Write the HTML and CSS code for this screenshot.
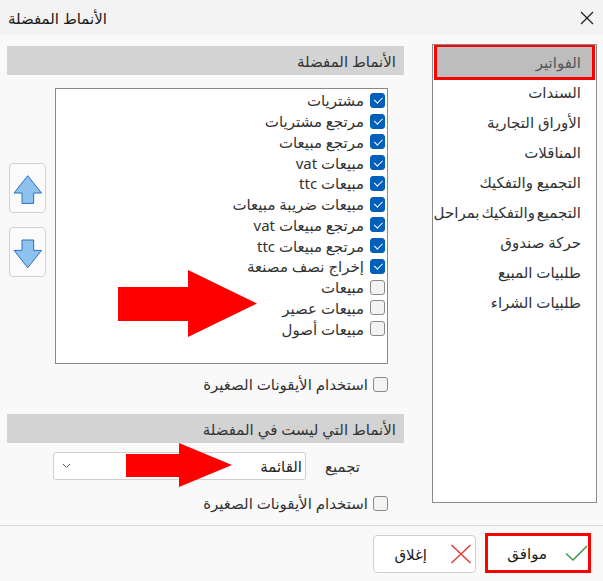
FILE: index.html
```html
<!DOCTYPE html>
<html lang="ar">
<head>
<meta charset="utf-8">
<title>الأنماط المفضلة</title>
<link rel="stylesheet" href="styles.css">
</head>
<body>
<div class="dialog">
  <div class="titlebar">
    <div class="title" dir="rtl">الأنماط المفضلة</div>
    <svg class="close-x" width="14" height="14" viewBox="0 0 14 14"><path d="M1 1 L13 13 M13 1 L1 13" stroke="#1f1f1f" stroke-width="1.2" fill="none"/></svg>
  </div>

  <div class="content">
    <div class="left">
      <div class="section-header" dir="rtl">الأنماط المفضلة</div>

      <div class="fav-row">
        <div class="move-buttons">
          <div class="move-btn">
            <svg width="37" height="50" viewBox="0 0 37 50"><polygon points="18.7,12 33.3,30.3 25,30.3 25,41.3 12.7,41.3 12.7,30.3 4.3,30.3" fill="#8ec3ef" stroke="#1f6bb8" stroke-width="1" stroke-linejoin="miter"/></svg>
          </div>
          <div class="move-btn">
            <svg width="37" height="50" viewBox="0 0 37 50"><polygon points="12.7,12.3 25,12.3 25,23.3 33.3,23.3 18.7,41.6 4.3,23.3 12.7,23.3" fill="#8ec3ef" stroke="#1f6bb8" stroke-width="1" stroke-linejoin="miter"/></svg>
          </div>
        </div>

        <div class="fav-list" dir="rtl">
          <div class="fav-item"><span class="cb checked"></span><span class="txt">مشتريات</span></div>
          <div class="fav-item"><span class="cb checked"></span><span class="txt">مرتجع مشتريات</span></div>
          <div class="fav-item"><span class="cb checked"></span><span class="txt">مرتجع مبيعات</span></div>
          <div class="fav-item"><span class="cb checked"></span><span class="txt">مبيعات vat</span></div>
          <div class="fav-item"><span class="cb checked"></span><span class="txt">مبيعات ttc</span></div>
          <div class="fav-item"><span class="cb checked"></span><span class="txt">مبيعات ضريبة مبيعات</span></div>
          <div class="fav-item"><span class="cb checked"></span><span class="txt">مرتجع مبيعات vat</span></div>
          <div class="fav-item"><span class="cb checked"></span><span class="txt">مرتجع مبيعات ttc</span></div>
          <div class="fav-item"><span class="cb checked"></span><span class="txt">إخراج نصف مصنعة</span></div>
          <div class="fav-item"><span class="cb"></span><span class="txt">مبيعات</span></div>
          <div class="fav-item"><span class="cb"></span><span class="txt">مبيعات عصير</span></div>
          <div class="fav-item"><span class="cb"></span><span class="txt">مبيعات أصول</span></div>
        </div>
      </div>

      <div class="check-row first-check" dir="rtl"><span class="cb"></span><span class="txt">استخدام الأيقونات الصغيرة</span></div>

      <div class="section-header second" dir="rtl">الأنماط التي ليست في المفضلة</div>

      <div class="group-row" dir="rtl">
        <span class="group-label">تجميع</span>
        <div class="combo">
          <span class="combo-text">القائمة</span>
          <svg class="chev" width="9" height="6" viewBox="0 0 9 6"><path d="M1 1 L4.5 4.5 L8 1" stroke="#555" stroke-width="1" fill="none"/></svg>
        </div>
      </div>

      <div class="check-row second-check" dir="rtl"><span class="cb"></span><span class="txt">استخدام الأيقونات الصغيرة</span></div>
    </div>

    <div class="categories" dir="rtl">
      <div class="cat selected">الفواتير</div>
      <div class="cat">السندات</div>
      <div class="cat">الأوراق التجارية</div>
      <div class="cat">المناقلات</div>
      <div class="cat">التجميع والتفكيك</div>
      <div class="cat long">التجميع والتفكيك بمراحل</div>
      <div class="cat">حركة صندوق</div>
      <div class="cat">طلبيات المبيع</div>
      <div class="cat">طلبيات الشراء</div>
    </div>
  </div>

  <div class="separator"></div>

  <div class="footer">
    <div class="btn close-btn" dir="rtl">
      <svg width="22" height="20" viewBox="0 0 22 20"><path d="M1.5 1 L20.5 19 M20.5 1 L1.5 19" stroke="#e0403c" stroke-width="1.6" fill="none"/></svg>
      <span>إغلاق</span>
    </div>
    <div class="btn ok-btn" dir="rtl">
      <svg width="23" height="16" viewBox="0 0 23 16"><path d="M1 8.5 L8 15 L22 1" stroke="#3c9a4c" stroke-width="1.5" fill="none"/></svg>
      <span>موافق</span>
    </div>
  </div>
</div>

<svg class="annot-arrow arrow-1" width="139" height="67" viewBox="0 0 139 67"><polygon points="0,17 70,17 70,0 139,33.5 70,67 70,51 0,51" fill="#ff0000"/></svg>
<svg class="annot-arrow arrow-2" width="106" height="44" viewBox="0 0 106 44"><polygon points="0,11 53,11 53,0 106,22 53,44 53,34 0,34" fill="#ff0000"/></svg>
</body>
</html>
```

FILE: styles.css
```css
* { box-sizing: border-box; }

html, body {
  margin: 0;
  padding: 0;
}

body {
  width: 603px;
  height: 581px;
  overflow: hidden;
  position: relative;
  background: #f9f9f9;
  font-family: "Noto Sans", "DejaVu Sans", sans-serif;
  font-size: 15px;
  color: #333;
}

.dialog {
  width: 603px;
  height: 581px;
  display: flex;
  flex-direction: column;
}

.titlebar {
  height: 35px;
  flex: none;
  background: #f3f3f3;
  display: flex;
  align-items: center;
  justify-content: space-between;
  padding: 0 8px 0 8px;
}

.title {
  font-size: 15px;
  color: #1a1a1a;
}

.close-x { display: block; margin-right: 1px; }

.content {
  height: 490px;
  flex: none;
  display: flex;
  padding: 9px 6px 0 7px;
  gap: 28px;
}

.left {
  width: 397px;
  flex: none;
  display: flex;
  flex-direction: column;
}

.section-header {
  height: 29px;
  margin-top: 2px;
  background: #d3d3d3;
  display: flex;
  align-items: center;
  padding-right: 8px;
  color: #333;
  white-space: nowrap;
}

.section-header.second {
  margin-top: 22px;
}

.fav-row {
  margin-top: 13px;
  display: flex;
  padding-left: 2px;
  gap: 9px;
}

.move-buttons {
  width: 37px;
  margin-top: 75px;
  display: flex;
  flex-direction: column;
  gap: 14px;
}

.move-btn {
  width: 37px;
  height: 50px;
  border: 1px solid #d2d2d2;
  border-radius: 4px;
  background: #fbfbfb;
  display: flex;
  align-items: center;
  justify-content: center;
}

.move-btn svg { display: block; }

.fav-list {
  width: 333px;
  height: 276px;
  background: #fff;
  border: 1px solid #8a8a8a;
  padding: 1px 2px 0 0;
  overflow: hidden;
}

.fav-item {
  height: 20.75px;
  display: flex;
  align-items: center;
  gap: 6px;
  white-space: nowrap;
}

.cb {
  width: 15px;
  height: 15px;
  flex: none;
  border: 1px solid #8a8a8a;
  border-radius: 3px;
  background: #f3f3f3;
  position: relative;
}

.cb.checked {
  background: #005fb8;
  border-color: #005fb8;
}

.cb.checked::after {
  content: "";
  position: absolute;
  left: 4.5px;
  top: 1.5px;
  width: 3.5px;
  height: 7px;
  border-right: 1.3px solid #fff;
  border-bottom: 1.3px solid #fff;
  transform: rotate(45deg);
}

.txt { color: #333; }

.check-row {
  display: flex;
  align-items: center;
  gap: 5px;
  padding-right: 16px;
  height: 16px;
  white-space: nowrap;
}

.first-check { margin-top: 12px; }
.second-check { margin-top: 15px; }

.group-row {
  margin-top: 9px;
  display: flex;
  align-items: center;
  padding-right: 44px;
  gap: 17px;
}

.group-label {
  width: 37px;
  flex: none;
  white-space: nowrap;
  color: #333;
}

.combo {
  width: 253px;
  height: 28px;
  flex: none;
  background: #fff;
  border: 1px solid #cfcfcf;
  border-radius: 3px;
  display: flex;
  align-items: center;
  justify-content: space-between;
  padding: 0 3px 0 8px;
}

.combo-text { color: #222; }
.chev { display: block; }

.categories {
  width: 165px;
  height: 459px;
  background: #fff;
  border: 1px solid #8a8a8a;
  padding-top: 2px;
  overflow: hidden;
}

.cat {
  height: 30px;
  margin: 0 4px;
  padding-right: 11px;
  display: flex;
  align-items: center;
  white-space: nowrap;
  color: #333;
}

.cat.long {
  margin-left: 0;
  word-spacing: -2px;
}

.cat.selected {
  background: #bdbdbd;
  color: #555;
  outline: 3px solid #ff0000;
}

.separator {
  height: 1px;
  flex: none;
  background: #d6d6d6;
}

.footer {
  flex: 1;
  display: flex;
  justify-content: flex-end;
  align-items: flex-start;
  padding: 9px 15px 0 0;
  gap: 12px;
}

.btn {
  display: flex;
  align-items: center;
  background: #fff;
  border-radius: 4px;
  color: #1a1a1a;
}

.close-btn {
  width: 103px;
  height: 38px;
  border: 1px solid #d0d0d0;
  padding-right: 3px;
  gap: 23px;
}

.ok-btn {
  width: 100px;
  height: 34px;
  margin-top: 1px;
  border-radius: 0;
  outline: 3px solid #ff0000;
  padding-right: 0;
  gap: 18px;
}

.btn svg { display: block; flex: none; }

.annot-arrow {
  position: absolute;
  display: block;
}

.arrow-1 { left: 118px; top: 270px; }
.arrow-2 { left: 126px; top: 443px; }
```
